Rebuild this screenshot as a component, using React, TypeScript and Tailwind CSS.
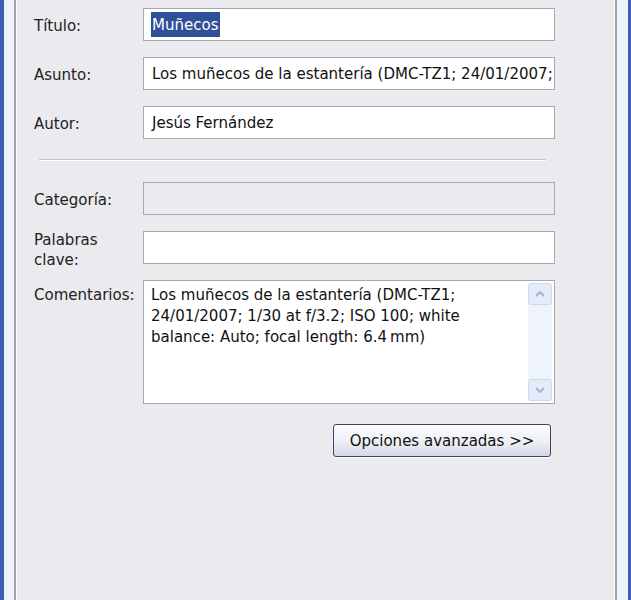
import React from 'react'

const font = { fontFamily: '"DejaVu Sans Condensed", "DejaVu Sans", sans-serif' }

function Field({ label, children, top = false, fixed = false }: { label: React.ReactNode; children: React.ReactNode; top?: boolean; fixed?: boolean }) {
  return (
    <div className={`flex ${top ? 'items-start' : 'items-center'} ${fixed ? 'h-[33px]' : ''}`}>
      <div className="w-[109px] shrink-0 text-[16.7px] leading-[20px] text-[#222]">{label}</div>
      {children}
    </div>
  )
}

function Box({ children, disabled = false }: { children?: React.ReactNode; disabled?: boolean }) {
  return (
    <div
      className={`h-[33px] w-[412px] shrink-0 border border-[#a9a8ad] px-[8px] flex items-center overflow-hidden whitespace-nowrap text-[16.7px] text-[#111] ${
        disabled ? 'bg-[#ebeaee]' : 'bg-white'
      }`}
    >
      {children}
    </div>
  )
}

export default function App() {
  return (
    <div className="h-[600px] w-[631px] bg-[#3d62b3] pl-[4px] pr-[3px] overflow-hidden" style={font}>
      <div className="h-full bg-[#eef2fb] pl-[10px] pr-[11px]">
        <div className="h-full border-x-2 border-[#a3a2a6] bg-white pl-[1px] pr-[1px]">
          <div className="h-full bg-[#ebeaee] pl-[17px] pt-[8px]">
            <div className="flex flex-col gap-[16px]">
              <Field label="Título:">
                <Box>
                  <span className="bg-[#2f5097] text-white px-[1px] -ml-[1px]">Muñecos</span>
                </Box>
              </Field>
              <Field label="Asunto:">
                <Box>Los muñecos de la estantería (DMC-TZ1; 24/01/2007; 1/30 at f/3.2; ISO 100)</Box>
              </Field>
              <Field label="Autor:">
                <Box>Jesús Fernández</Box>
              </Field>
            </div>

            <div className="ml-[5px] mt-[20px] w-[507px] border-t border-[#c4c2c8] border-b border-b-white" />

            <div className="mt-[21px] flex flex-col gap-[16px]">
              <Field label="Categoría:">
                <Box disabled />
              </Field>
              <Field label={<div className="-mt-[2px]">Palabras<br />clave:</div>} top fixed>
                <Box />
              </Field>
              <Field label={<div className="pt-[4px]">Comentarios:</div>} top>
                <div className="flex h-[124px] w-[412px] border border-[#a9a8ad] bg-white">
                  <div className="flex-1 pl-[7px] pt-[3px] text-[16.7px] leading-[21px] text-[#111]">
                    Los muñecos de la estantería (DMC-TZ1;
                    <br />
                    24/01/2007; 1/30 at f/3.2; ISO 100; white
                    <br />
                    balance: Auto; focal length: 6.4&thinsp;mm)
                  </div>
                  <div className="my-[2px] mr-[2px] flex w-[24px] flex-col justify-between rounded-[2px] bg-[#eef3fc]">
                    <div className="flex h-[22px] items-center justify-center rounded-[3px] border border-[#cfdaed] bg-[#e4ecf9]">
                      <svg viewBox="0 0 10 6" className="h-[6px] w-[10px]" fill="none" stroke="#a4b5d4" strokeWidth="2">
                        <path d="M1 5 L5 1 L9 5" />
                      </svg>
                    </div>
                    <div className="flex h-[22px] items-center justify-center rounded-[3px] border border-[#cfdaed] bg-[#e4ecf9]">
                      <svg viewBox="0 0 10 6" className="h-[6px] w-[10px]" fill="none" stroke="#a4b5d4" strokeWidth="2">
                        <path d="M1 1 L5 5 L9 1" />
                      </svg>
                    </div>
                  </div>
                </div>
              </Field>
            </div>

            <div className="mt-[20px] flex w-[517px] justify-end">
              <button className="h-[33px] w-[218px] rounded-[3px] border border-[#3a4766] bg-gradient-to-b from-[#fdfdfe] via-[#eff1f6] to-[#d3d8e5] text-[16.7px] text-[#111] shadow-[0_1px_0_#ffffff]">
                Opciones avanzadas &gt;&gt;
              </button>
            </div>
          </div>
        </div>
      </div>
    </div>
  )
}
